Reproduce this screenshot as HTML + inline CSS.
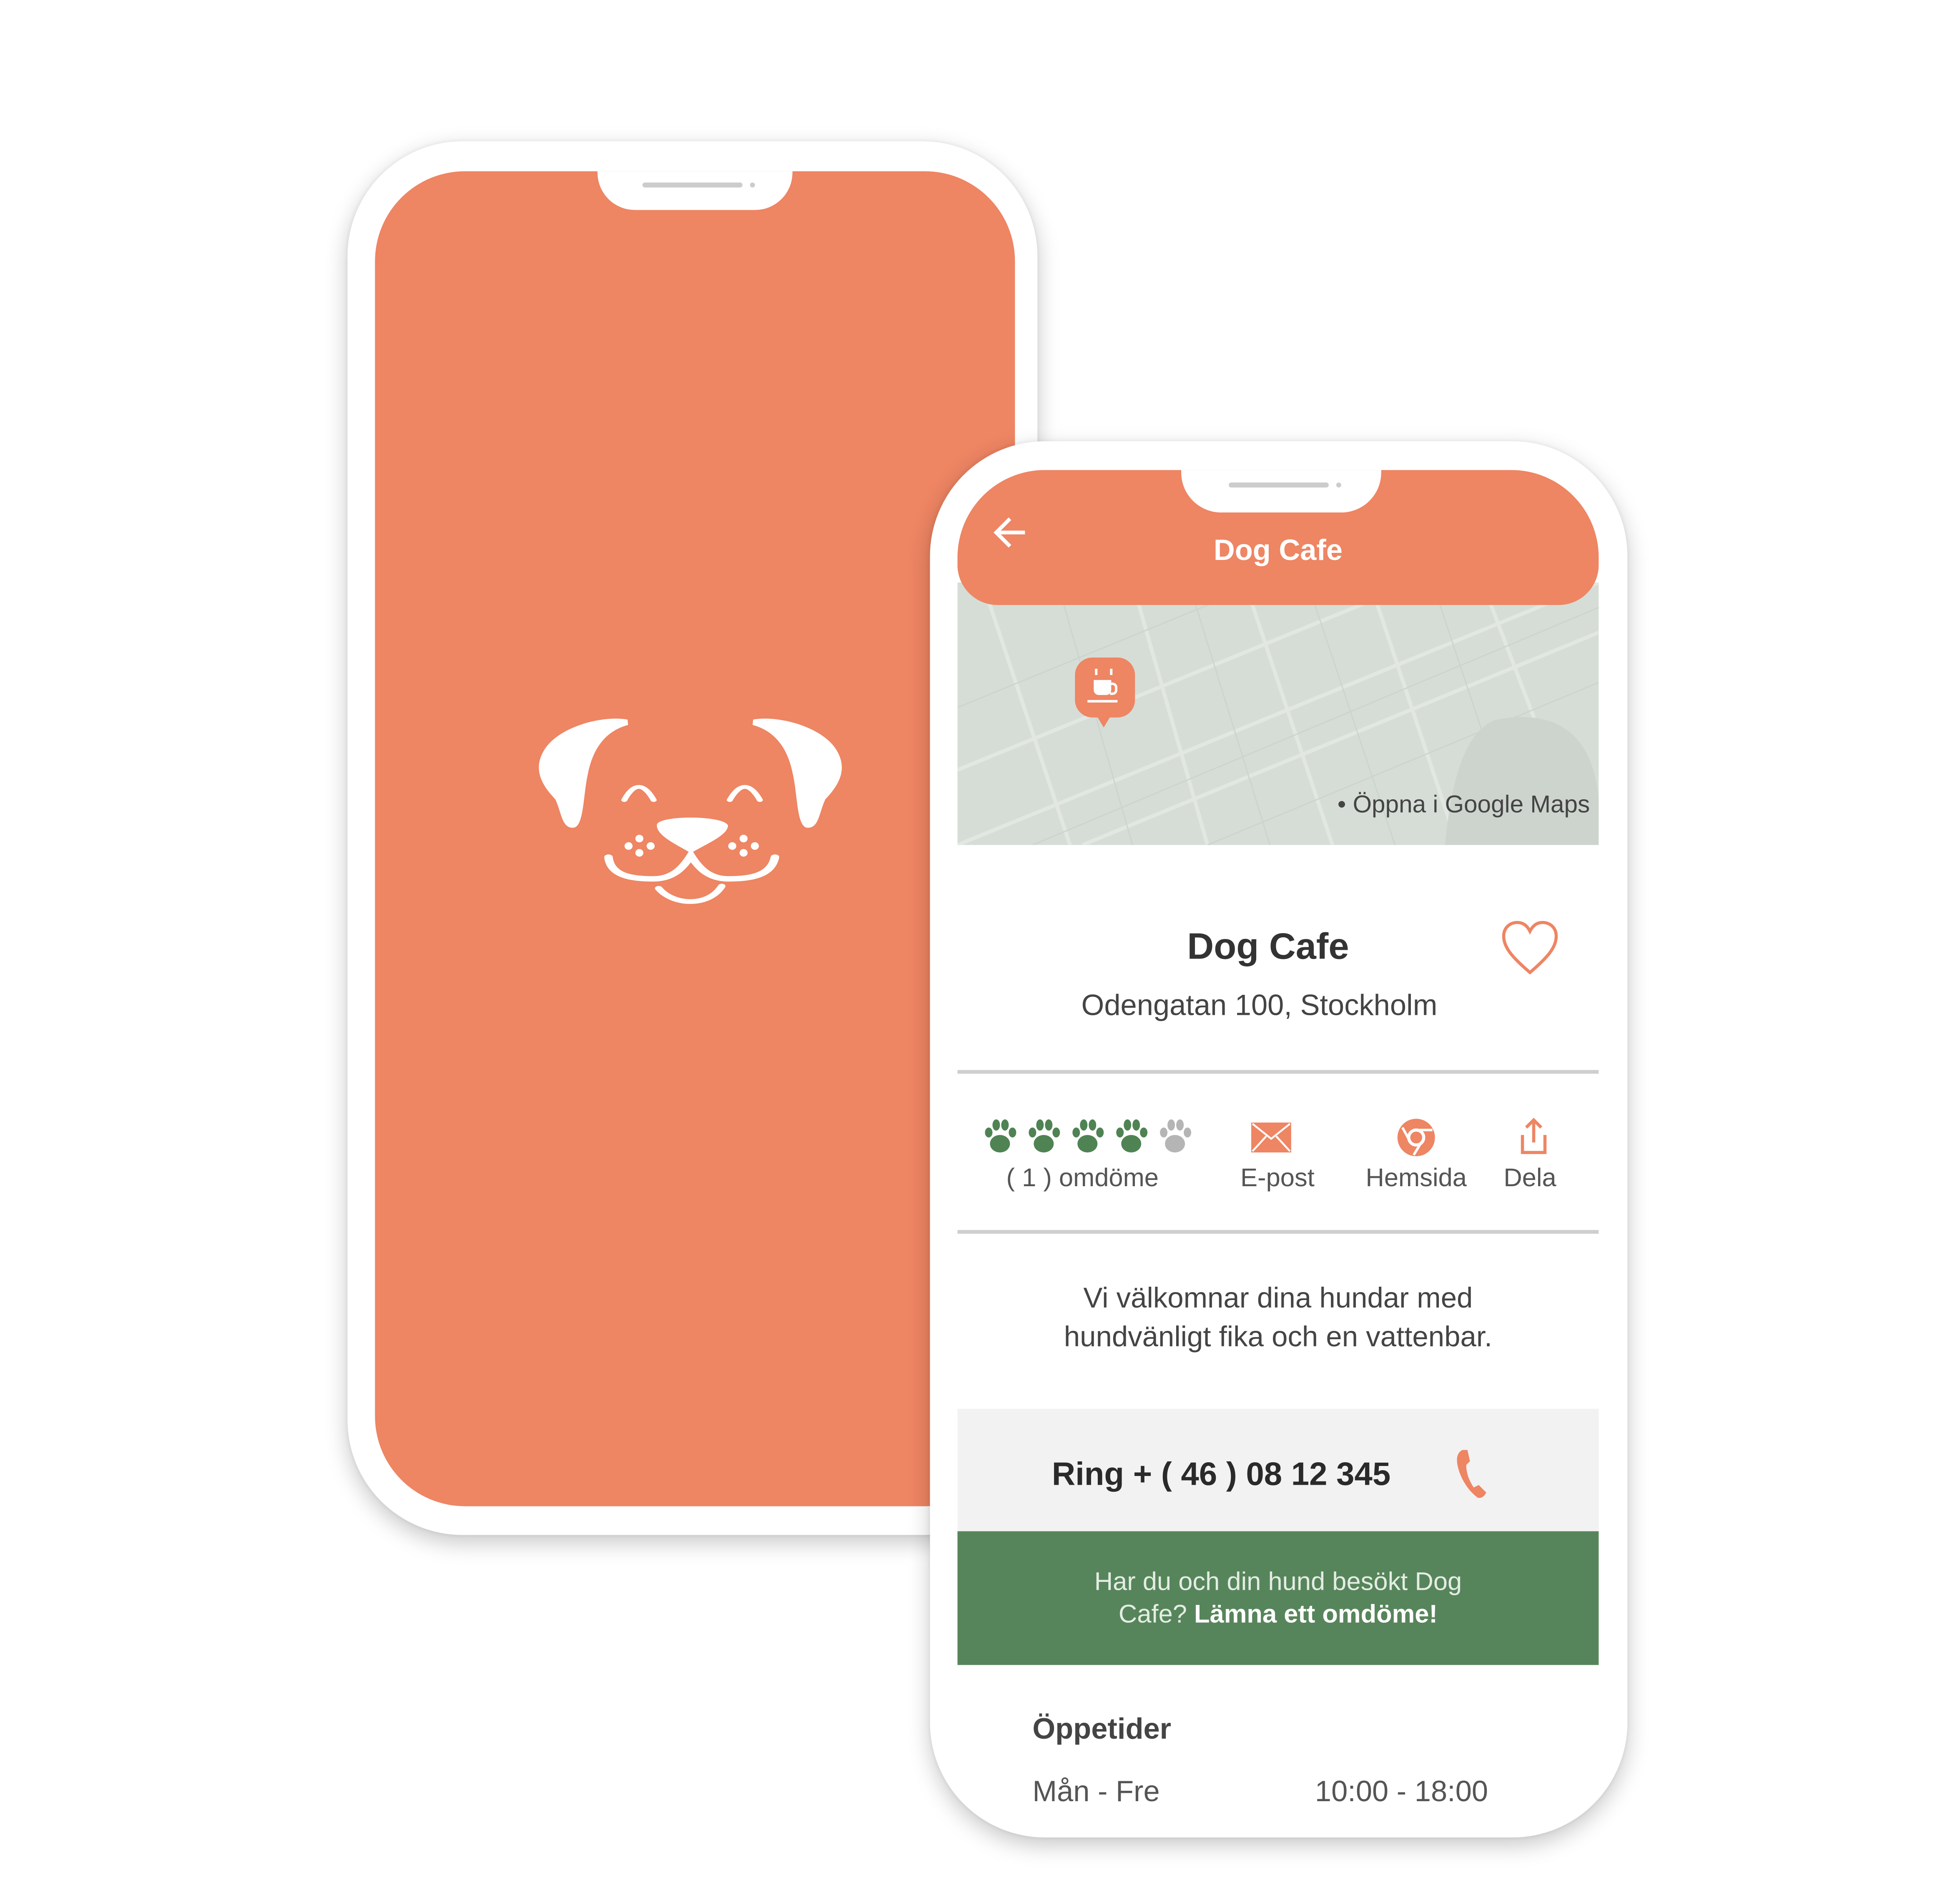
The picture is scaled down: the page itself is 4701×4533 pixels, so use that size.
<!DOCTYPE html>
<html><head><meta charset="utf-8">
<style>
html,body{margin:0;padding:0;background:#fff;overflow:hidden}
body{width:4701px;height:4531px}
#w{position:absolute;left:0;top:0;width:1568px;height:1512px;transform:scale(2.998);transform-origin:0 0;font-family:"Liberation Sans",sans-serif}
.abs{position:absolute}
.c{display:inline-block;white-space:nowrap}
.frame{position:absolute;background:#fff;box-shadow:0 6px 18px rgba(0,0,0,.22),0 0 4px rgba(0,0,0,.08)}
.t{position:absolute;left:0;right:0;text-align:center;white-space:nowrap}
.lbl{position:absolute;width:160px;text-align:center;font-size:20.5px;color:#555;white-space:nowrap}
</style></head><body><div id="w">

<!-- back phone -->
<div class="frame" style="left:278px;top:113px;width:552px;height:1115px;border-radius:92px"></div>
<div class="abs" style="left:300px;top:137px;width:512px;height:1068px;border-radius:72px;background:#ee8563;overflow:hidden">
  <div class="abs" style="left:178px;top:-2px;width:156px;height:33px;background:#fff;border-radius:0 0 30px 30px"></div>
  <div class="abs" style="left:214px;top:9px;width:80px;height:4px;background:#ccc;border-radius:2px"></div>
  <div class="abs" style="left:300px;top:9px;width:4px;height:4px;background:#ccc;border-radius:2px"></div>
</div>
<svg class="abs" style="left:398px;top:548px" width="315" height="199" viewBox="0 0 1568 1568" preserveAspectRatio="none">
 <g fill="#fff">
  <path d="M518,218 C420,190 250,260 190,400 C140,520 170,620 230,720 C255,800 255,900 300,900 C345,900 340,700 360,560 C380,400 430,290 520,252 Z"/>
  <path d="M1018,218 C1116,190 1286,260 1346,400 C1396,520 1366,620 1306,720 C1281,800 1281,900 1236,900 C1191,900 1196,700 1176,560 C1156,400 1106,290 1016,252 Z"/>
  <path d="M635,880 C645,820 900,820 918,885 C918,950 820,1010 770,1060 C720,1010 630,950 635,880 Z"/>
  <ellipse cx="565" cy="968" rx="16" ry="24"/><ellipse cx="522" cy="1015" rx="16" ry="24"/><ellipse cx="610" cy="1015" rx="16" ry="24"/><ellipse cx="565" cy="1058" rx="16" ry="24"/>
  <ellipse cx="980" cy="968" rx="16" ry="24"/><ellipse cx="935" cy="1015" rx="16" ry="24"/><ellipse cx="1025" cy="1015" rx="16" ry="24"/><ellipse cx="980" cy="1058" rx="16" ry="24"/>
 </g>
 <g fill="none" stroke="#fff" stroke-linecap="round">
  <path d="M505,725 Q562,560 622,725" stroke-width="24"/>
  <path d="M925,725 Q985,560 1045,725" stroke-width="24"/>
  <path d="M442,1085 C450,1200 530,1222 620,1222 C700,1222 740,1150 770,1075 C800,1150 840,1222 920,1222 C1010,1222 1090,1200 1105,1085" stroke-width="34"/>
  <path d="M642,1282 C700,1390 840,1400 893,1268" stroke-width="30"/>
 </g>
</svg>

<!-- front phone -->
<div class="frame" style="left:744px;top:353px;width:558px;height:1117px;border-radius:92px"></div>
<div class="abs" style="left:766px;top:376px;width:513px;height:1074px;border-radius:70px 70px 60px 60px;background:#fff;overflow:hidden">
  <!-- map -->
  <div class="abs" style="left:0;top:90px;width:513px;height:210px;background:#d6ddd7;overflow:hidden">
    <svg width="513" height="210" style="position:absolute;left:0;top:0">
      <g stroke="#e2e7e2" stroke-width="3" fill="none">
        <path d="M0,150 L513,-60"/><path d="M0,210 L513,0"/><path d="M100,210 L513,40"/>
        <path d="M20,0 L90,210"/><path d="M140,0 L200,210"/><path d="M230,0 L300,210"/><path d="M330,0 L400,210"/><path d="M420,0 L500,210"/>
      </g>
      <g stroke="#cdd4ce" stroke-width="1" fill="none">
        <path d="M0,100 L513,-110"/><path d="M60,210 L513,20"/><path d="M200,210 L513,80"/>
        <path d="M80,0 L140,210"/><path d="M185,0 L250,210"/><path d="M280,0 L350,210"/><path d="M380,0 L450,210"/>
      </g>
      <path d="M430,110 C480,100 520,120 513,210 L390,210 C395,160 405,120 430,110Z" fill="#cdd4ce"/>
    </svg>
    <div class="abs" style="left:94px;top:60px;width:48px;height:48px;background:#ee8563;border-radius:14px"></div>
    <div class="abs" style="left:111px;top:106px;width:0;height:0;border-left:6px solid transparent;border-right:6px solid transparent;border-top:10px solid #ee8563"></div>
    <div class="abs" style="left:109px;top:78px;width:14px;height:12px;background:#fff;border-radius:0 0 4px 4px"></div>
    <div class="abs" style="left:122px;top:80px;width:4px;height:6px;border:2px solid #fff;border-left:none;border-radius:0 4px 4px 0"></div>
    <div class="abs" style="left:104px;top:94px;width:24px;height:2px;background:#fff"></div>
    <div class="abs" style="left:110px;top:69px;width:10px;height:5px;border-left:2px solid #fff;border-right:2px solid #fff"></div>
    <div class="abs" style="left:304px;top:167px;font-size:19.5px;color:#444;white-space:nowrap">• Öppna i Google Maps</div>
  </div>
  <!-- header -->
  <div class="abs" style="left:0;top:0;width:513px;height:108px;background:#ee8563;border-radius:0 0 32px 32px"></div>
  <div class="abs" style="left:179px;top:-2px;width:160px;height:36px;background:#fff;border-radius:0 0 32px 32px"></div>
  <div class="abs" style="left:217px;top:10px;width:80px;height:4px;background:#ccc;border-radius:2px"></div>
  <div class="abs" style="left:303px;top:10px;width:4px;height:4px;background:#ccc;border-radius:2px"></div>
  <svg class="abs" style="left:28px;top:36px" width="30" height="28"><path d="M26,14 H4 M14,3 L3,14 L14,25" stroke="#fff" stroke-width="3" fill="none"/></svg>
  <div class="t" style="top:51px;font-size:23.5px;font-weight:bold;color:#fff">Dog Cafe</div>

  <!-- info -->
  <div class="t" style="top:365px;left:-16px;font-size:29.5px;font-weight:bold;color:#333">Dog Cafe</div>
  <div class="t" style="top:415px;left:-30px;font-size:23.5px;color:#444">Odengatan 100, Stockholm</div>
  <svg class="abs" style="left:434px;top:360px" width="48" height="46" viewBox="0 0 48 46"><path d="M24,42 C10,30 3,22 3,13 C3,6 8,2 14,2 C19,2 22,5 24,9 C26,5 29,2 34,2 C40,2 45,6 45,13 C45,22 38,30 24,42Z" fill="none" stroke="#ee8563" stroke-width="2.5"/></svg>
  <div class="abs" style="left:0;top:480px;width:513px;height:3px;background:#cfcfcf"></div>

  <!-- icons row -->
  <svg class="abs" style="left:20px;top:518px" width="175" height="32" viewBox="0 0 175 32">
    <defs><g id="paw"><ellipse cx="14" cy="21" rx="8" ry="7"/><ellipse cx="5" cy="12" rx="3" ry="4"/><ellipse cx="11" cy="6" rx="3" ry="4.5"/><ellipse cx="18" cy="6" rx="3" ry="4.5"/><ellipse cx="24" cy="12" rx="3" ry="4"/></g></defs>
    <g fill="#4f8353"><use href="#paw" x="0"/><use href="#paw" x="35"/><use href="#paw" x="70"/><use href="#paw" x="105"/></g>
    <g fill="#b5b5b5"><use href="#paw" x="140"/></g>
  </svg>
  <div class="lbl" style="left:20px;top:555px">( 1 ) omdöme</div>
  <svg class="abs" style="left:235px;top:522px" width="32" height="24"><rect x="0" y="0" width="32" height="24" fill="#ee8563"/><path d="M1,1 L16,13 L31,1 M1,23 L12,11 M31,23 L20,11" stroke="#fff" stroke-width="1.5" fill="none"/></svg>
  <div class="lbl" style="left:176px;top:555px">E-post</div>
  <svg class="abs" style="left:351px;top:518px" width="32" height="32"><circle cx="16" cy="16" r="15" fill="#ee8563"/><circle cx="16" cy="16" r="6" fill="none" stroke="#fff" stroke-width="2.5"/><path d="M16,10 L29,10 M11,19 L5,8 M20,20 L14,30" stroke="#fff" stroke-width="2"/></svg>
  <div class="lbl" style="left:287px;top:555px">Hemsida</div>
  <svg class="abs" style="left:448px;top:518px" width="26" height="32"><path d="M13,2 V20 M7,8 L13,2 L19,8 M4,14 V28 H22 V14" stroke="#ee8563" stroke-width="2.5" fill="none"/></svg>
  <div class="lbl" style="left:378px;top:555px">Dela</div>
  <div class="abs" style="left:0;top:608px;width:513px;height:3px;background:#cfcfcf"></div>

  <div class="t" style="top:647px;font-size:23px;color:#444;line-height:31px">Vi välkomnar dina hundar med<br>hundvänligt fika och en vattenbar.</div>

  <div class="abs" style="left:0;top:751px;width:513px;height:98px;background:#f2f2f2"></div>
  <div class="abs" style="left:46px;top:788px;width:330px;text-align:center;font-size:26px;font-weight:bold;color:#2a2a2a;white-space:nowrap">Ring + ( 46 ) 08 12 345</div>
  <svg class="abs" style="left:398px;top:782px" width="28" height="42" viewBox="0 0 28 42"><path d="M6,2 C2,4 1,8 2,14 C4,24 10,34 18,40 C20,41 23,40 25,36 L19,30 L15,32 C11,26 9,20 9,14 L12,11 L10,2 Z" fill="#ee8563"/></svg>

  <div class="abs" style="left:0;top:849px;width:513px;height:107px;background:#57855b"></div>
  <div class="t" style="top:877px;font-size:20.5px;color:#e4ede4;line-height:26px">Har du och din hund besökt Dog<br>Cafe? <b style="color:#fff">Lämna ett omdöme!</b></div>

  <div class="abs" style="left:60px;top:994px;font-size:23.5px;font-weight:bold;color:#444;white-space:nowrap">Öppetider</div>
  <div class="abs" style="left:60px;top:1044px;font-size:23.5px;color:#555;white-space:nowrap">Mån - Fre</div>
  <div class="abs" style="left:286px;top:1044px;font-size:23.5px;color:#555;white-space:nowrap">10:00 - 18:00</div>
</div>

</div></body></html>
